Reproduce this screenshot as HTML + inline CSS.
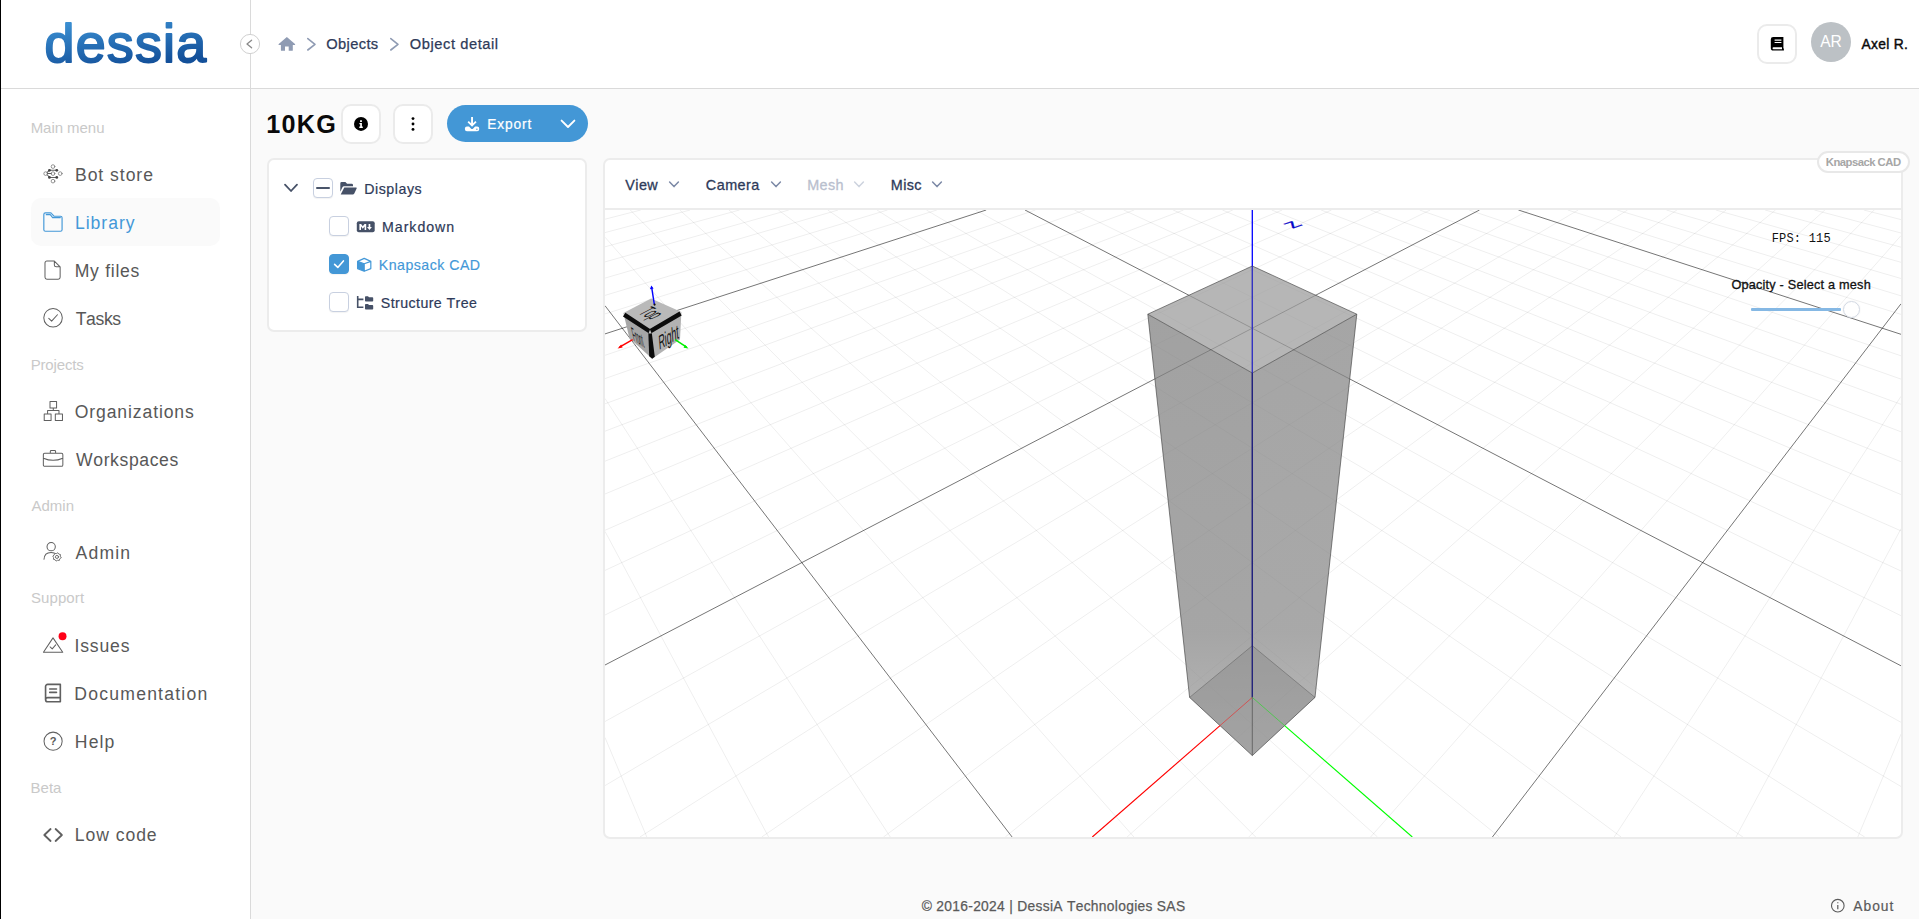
<!DOCTYPE html>
<html lang="en"><head><meta charset="utf-8"><title>Object detail</title>
<style>
*{box-sizing:border-box;margin:0;padding:0}
html,body{width:1919px;height:919px;overflow:hidden}
body{background:#fafafa;font-family:"Liberation Sans",sans-serif;position:relative;font-kerning:none}
.t{position:absolute;white-space:pre;font-weight:400;display:block}
.ic{position:absolute;display:block;overflow:visible}
.top{z-index:5}
#sidebar{position:absolute;left:0;top:0;width:251px;height:919px;background:#fff;border-right:1px solid #dadada}
#edge{position:absolute;left:0;top:0;width:1px;height:919px;background:#000;z-index:6}
#header{position:absolute;left:0;top:0;width:1919px;height:89px;background:#fff;border-bottom:1px solid #dadada}
.panel{position:absolute;background:#fff;border:2px solid #ececec;border-radius:7px}
.active{position:absolute;background:#fafafa;border-radius:10px}
.sqbtn{position:absolute;width:40px;height:40px;background:#fff;border:2px solid #ebebeb;border-radius:10px}
.avatar{position:absolute;width:40px;height:40px;border-radius:50%;background:#bcc1c5}
.export{position:absolute;background:#4397d6;border-radius:19px}
.cb{position:absolute;width:20px;height:20px;background:#fff;border:1px solid #c8d0e0;border-radius:4px;box-shadow:0 1px 1px rgba(0,0,0,.05)}
.cb i{position:absolute;left:2px;top:8px;width:14px;height:2px;background:#4a556a;border-radius:1px}
.cb.on{background:#4397d6;border-color:#4397d6}
.tag{position:absolute;background:#fff;border:2px solid #e8e8e8;border-radius:11px}
.track{position:absolute;background:#85b8e4;border-radius:1px}
.thumb{position:absolute;width:17px;height:17px;border-radius:50%;background:rgba(255,255,255,.75);border:1px solid #d3d9e3;box-shadow:0 0 2px rgba(0,0,0,.08)}
#canvas3d{position:absolute;left:605px;top:210px;display:block}
#hline{position:absolute;left:0;top:88px;width:1919px;height:1px;background:#dadada;z-index:3}
#tbline{position:absolute;left:605px;top:208px;width:1296px;height:2px;background:#ececec}
</style></head><body>
<header id="header">
<svg class="ic top" style="left:239px;top:32.75px" width="22" height="22" viewBox="0 0 22 22" ><circle cx="11" cy="11" r="9.6" fill="#fff" stroke="#d0d0d0" stroke-width="1"/><path d="M12.6 7.2L8 11L12.6 14.8" fill="none" stroke="#8a8a8a" stroke-width="1.3" stroke-linecap="round" stroke-linejoin="round"/></svg>
<svg class="ic" style="left:278px;top:36px" width="18" height="16" viewBox="0 0 18 16" ><path fill="#8f9bb3" d="M8.85 0.9L0.7 8.1a.5.5 0 0 0 .35.85H2.9V14.2a.6.6 0 0 0 .6.6H7V10.4H10.7V14.8h3.5a.6.6 0 0 0 .6-.6V8.95h1.85a.5.5 0 0 0 .35-.85Z"/></svg>
<svg class="ic" style="left:304.6px;top:36px" width="14" height="16" viewBox="0 0 14 16" ><path d="M2.8 2.6L10 8.3L2.8 14" fill="none" stroke="#8f9bb3" stroke-width="1.6" stroke-linecap="round" stroke-linejoin="round"/></svg>
<svg class="ic" style="left:387.7px;top:36px" width="14" height="16" viewBox="0 0 14 16" ><path d="M2.8 2.6L10 8.3L2.8 14" fill="none" stroke="#8f9bb3" stroke-width="1.6" stroke-linecap="round" stroke-linejoin="round"/></svg>
<span class="t" style="left:326.20px;top:35.00px;font-size:14.70px;line-height:19px;letter-spacing:0.365px;color:#2e3a59;-webkit-text-stroke:0.25px #2e3a59;">Objects</span>
<span class="t" style="left:409.80px;top:35.00px;font-size:14.70px;line-height:19px;letter-spacing:0.556px;color:#2e3a59;-webkit-text-stroke:0.25px #2e3a59;">Object detail</span>
<div class="sqbtn" style="left:1757px;top:24px"></div>
<svg class="ic" style="left:1769px;top:35px" width="16" height="18" viewBox="0 0 16 18" ><path fill="#000" d="M4.2 2H14.4V13.6H14.9V15.6H4.4A2.6 2.6 0 0 1 1.8 13V4.4A2.4 2.4 0 0 1 4.2 2ZM5.6 4.6V5.8H12.4V4.6ZM5.6 6.9V8.1H12.4V6.9ZM4.5 12.3a.95.95 0 0 0 0 1.9H13V12.3Z"/></svg>
<div class="avatar" style="left:1811px;top:21.8px"></div>
<span class="t" style="left:1820.37px;top:32.49px;font-size:15.60px;line-height:20px;letter-spacing:-0.217px;color:#fff;">AR</span>
<span class="t" style="left:1861.47px;top:35.52px;font-size:13.80px;line-height:18px;letter-spacing:0.335px;color:#0a0a0a;-webkit-text-stroke:0.4px #0a0a0a;">Axel R.</span>
</header>
<nav id="sidebar">
<svg class="ic logo" style="left:40px;top:14px" width="180" height="60" viewBox="0 0 180 60" ><defs><linearGradient id="lg" x1="0" y1="0" x2="0.35" y2="1"><stop offset="0.1" stop-color="#3f96d8"/><stop offset="0.95" stop-color="#13509a"/></linearGradient></defs><text x="4.6" y="48.0" font-family="Liberation Sans, sans-serif" font-size="53.8" letter-spacing="1.2" fill="url(#lg)" stroke="url(#lg)" stroke-width="1.9" stroke-linejoin="round">dessia</text></svg>
<span class="t sec" style="left:30.67px;top:117.70px;font-size:15.00px;line-height:20px;letter-spacing:-0.047px;color:#c9c9c9;">Main menu</span>
<span class="t sec" style="left:30.67px;top:354.50px;font-size:15.00px;line-height:20px;letter-spacing:-0.159px;color:#c9c9c9;">Projects</span>
<span class="t sec" style="left:31.57px;top:495.60px;font-size:15.00px;line-height:20px;letter-spacing:-0.028px;color:#c9c9c9;">Admin</span>
<span class="t sec" style="left:30.92px;top:588.10px;font-size:15.00px;line-height:20px;letter-spacing:0.109px;color:#c9c9c9;">Support</span>
<span class="t sec" style="left:30.57px;top:777.60px;font-size:15.00px;line-height:20px;letter-spacing:-0.009px;color:#c9c9c9;">Beta</span>
<div class="active" style="left:31px;top:198px;width:189px;height:48px"></div>
<span class="t item" style="left:74.96px;top:163.90px;font-size:17.60px;line-height:23px;letter-spacing:0.949px;color:#585858;">Bot store</span>
<span class="t item" style="left:74.96px;top:211.90px;font-size:17.60px;line-height:23px;letter-spacing:0.964px;color:#4398d8;">Library</span>
<span class="t item" style="left:74.66px;top:260.10px;font-size:17.60px;line-height:23px;letter-spacing:0.733px;color:#585858;">My files</span>
<span class="t item" style="left:75.70px;top:307.90px;font-size:17.60px;line-height:23px;letter-spacing:-0.377px;color:#585858;">Tasks</span>
<span class="t item" style="left:74.77px;top:401.00px;font-size:17.60px;line-height:23px;letter-spacing:0.873px;color:#585858;">Organizations</span>
<span class="t item" style="left:76.02px;top:448.90px;font-size:17.60px;line-height:23px;letter-spacing:0.610px;color:#585858;">Workspaces</span>
<span class="t item" style="left:75.57px;top:541.70px;font-size:17.60px;line-height:23px;letter-spacing:1.148px;color:#585858;">Admin</span>
<span class="t item" style="left:74.48px;top:635.00px;font-size:17.60px;line-height:23px;letter-spacing:0.839px;color:#585858;">Issues</span>
<span class="t item" style="left:74.36px;top:683.10px;font-size:17.60px;line-height:23px;letter-spacing:1.209px;color:#585858;">Documentation</span>
<span class="t item" style="left:74.86px;top:730.90px;font-size:17.60px;line-height:23px;letter-spacing:1.062px;color:#585858;">Help</span>
<span class="t item" style="left:74.86px;top:823.90px;font-size:17.60px;line-height:23px;letter-spacing:0.926px;color:#585858;">Low code</span>
<svg class="ic" style="left:41px;top:162px" width="24" height="24" viewBox="0 0 24 24" overflow="visible"><g transform="translate(12 12) scale(0.965) translate(-12 -12)"><g fill="none" stroke="#606060" stroke-width="1.05" stroke-linecap="round" stroke-linejoin="round"><circle cx="12" cy="4.3" r="1.9" stroke-width="0.8" stroke="#777"/><circle cx="4.4" cy="11.6" r="1.9" stroke-width="0.8" stroke="#777"/><circle cx="19.5" cy="11.6" r="1.9" stroke-width="0.8" stroke="#777"/><circle cx="12" cy="19.4" r="1.9" stroke-width="0.8" stroke="#777"/><circle cx="12" cy="11.6" r="1.9" stroke-width="0.8" stroke="#777"/><path d="M8.3 8.2H15.9M8.3 15.6H15.9M6.2 11.6H10.2M6 10.4L7.6 8.8M6 12.8L7.6 14.6"/></g><circle cx="8.3" cy="8.2" r="1.45" fill="#444"/><circle cx="15.9" cy="8.2" r="1.45" fill="#444"/><circle cx="8.3" cy="15.6" r="1.45" fill="#444"/><circle cx="15.9" cy="15.6" r="1.45" fill="#444"/></g></svg>
<svg class="ic" style="left:41px;top:210px" width="24" height="24" viewBox="0 0 24 24" overflow="visible"><g transform="translate(12 12) scale(0.965) translate(-12 -12)"><path fill="none" stroke="#4398d8" stroke-width="1.2" stroke-linecap="round" stroke-linejoin="round" d="M2.5 5.2V20a1.6 1.6 0 0 0 1.6 1.6H19.8a1.6 1.6 0 0 0 1.6-1.6V7.6a1.6 1.6 0 0 0-1.6-1.6H13L10.6 3.2a1.6 1.6 0 0 0-1.2-.6H4.1a1.6 1.6 0 0 0-1.6 1.6ZM5 4.4H9.2L11.6 7.4H19.6"/></g></svg>
<svg class="ic" style="left:41px;top:258px" width="24" height="24" viewBox="0 0 24 24" overflow="visible"><g transform="translate(12 12) scale(0.965) translate(-12 -12)"><path fill="none" stroke="#606060" stroke-width="1.05" stroke-linecap="round" stroke-linejoin="round" d="M5.7 2.7H13.4L19.4 8.7V19.5a2 2 0 0 1-2 2H5.7a2 2 0 0 1-2-2V4.7a2 2 0 0 1 2-2ZM13.4 2.9V6.7a2 2 0 0 0 2 2H19.2"/></g></svg>
<svg class="ic" style="left:41px;top:306px" width="24" height="24" viewBox="0 0 24 24" overflow="visible"><g transform="translate(12 12) scale(0.965) translate(-12 -12)"><g fill="none" stroke="#606060" stroke-width="1.05" stroke-linecap="round" stroke-linejoin="round"><circle cx="12.05" cy="11.8" r="9.6"/><path d="M7.6 12.4L10.6 15.3L16.6 8.6"/></g></g></svg>
<svg class="ic" style="left:41px;top:399px" width="24" height="24" viewBox="0 0 24 24" overflow="visible"><g transform="translate(12 12) scale(0.965) translate(-12 -12)"><path fill="none" stroke="#606060" stroke-width="1.05" stroke-linecap="round" stroke-linejoin="round" d="M8.9 2.1h6.8v6.7H8.9ZM2.9 15h7.1v6.8H2.9ZM14.4 15h7.4v6.8h-7.4ZM12.3 8.8V11.5M6.4 15V11.5H18.2V15"/></g></svg>
<svg class="ic" style="left:41px;top:447px" width="24" height="24" viewBox="0 0 24 24" overflow="visible"><g transform="translate(12 12) scale(0.965) translate(-12 -12)"><path fill="none" stroke="#606060" stroke-width="1.05" stroke-linecap="round" stroke-linejoin="round" d="M3.4 6.1H20.8a1.4 1.4 0 0 1 1.4 1.4V18.1a1.4 1.4 0 0 1-1.4 1.4H3.4A1.4 1.4 0 0 1 2 18.1V7.5A1.4 1.4 0 0 1 3.4 6.1ZM9.2 6V4.2a1 1 0 0 1 1-1h3.5a1 1 0 0 1 1 1V6M2.1 11.2Q12.1 15.6 22.1 11.2"/></g></svg>
<svg class="ic" style="left:41px;top:540px" width="24" height="24" viewBox="0 0 24 24" overflow="visible"><g transform="translate(12 12) scale(0.965) translate(-12 -12)"><g fill="none" stroke="#606060" stroke-width="1.05" stroke-linecap="round" stroke-linejoin="round"><circle cx="10.1" cy="6.5" r="4.3"/><path d="M2.7 19.6C2.9 14.6 6.2 12.4 10 12.4C11.4 12.4 12.4 12.7 13.2 13.1"/><g stroke-width="0.9"><path d="M20.42 17.96L19.01 19.04L18.54 20.76L16.78 20.53L15.24 21.42L14.16 20.01L12.44 19.54L12.67 17.78L11.78 16.24L13.19 15.16L13.66 13.44L15.42 13.67L16.96 12.78L18.04 14.19L19.76 14.66L19.53 16.42Z"/><circle cx="16.1" cy="17.1" r="1.6"/></g></g></g></svg>
<svg class="ic" style="left:41px;top:633px" width="24" height="24" viewBox="0 0 24 24" overflow="visible"><g transform="translate(12 12) scale(0.965) translate(-12 -12)"><g fill="none" stroke="#606060" stroke-width="1.05" stroke-linecap="round" stroke-linejoin="round"><path d="M12 4.6L2.1 19.6H22.1Z"/><path d="M9 14L11.2 16L14.8 11.9"/></g><circle cx="21.9" cy="2.9" r="4.1" fill="#ff0017"/></g></svg>
<svg class="ic" style="left:41px;top:681px" width="24" height="24" viewBox="0 0 24 24" overflow="visible"><g transform="translate(12 12) scale(0.965) translate(-12 -12)"><path fill="none" stroke="#606060"  stroke-linecap="round" stroke-linejoin="round" stroke-width="1.7" d="M4.3 18.9V5.3a2.2 2.2 0 0 1 2.2-2.2H19.6V21.1H6.5a2.15 2.15 0 0 1 0-4.3H19.6M8.6 7.8H15.6M8.6 11.4H15.6"/></g></svg>
<svg class="ic" style="left:41px;top:729px" width="24" height="24" viewBox="0 0 24 24" overflow="visible"><g transform="translate(12 12) scale(0.965) translate(-12 -12)"><circle fill="none" stroke="#606060" stroke-width="1.05" stroke-linecap="round" stroke-linejoin="round" cx="12.1" cy="12.2" r="9.4"/><text x="12.1" y="16.3" text-anchor="middle" font-family="Liberation Sans, sans-serif" font-size="11.5" font-weight="700" fill="#5a5a5a">?</text></g></svg>
<svg class="ic" style="left:41px;top:822.8px" width="24" height="24" viewBox="0 0 24 24" overflow="visible"><g transform="translate(12 12) scale(0.965) translate(-12 -12)"><path fill="none" stroke="#606060"  stroke-linecap="round" stroke-linejoin="round" stroke-width="1.9" d="M9.5 5.8L3 12L9.5 18.2M14.7 5.8L21.2 12L14.7 18.2"/></g></svg>
</nav>
<div id="hline"></div><div id="edge"></div>
<main>
<h1 class="t" style="left:266.21px;top:108.26px;font-size:25.20px;line-height:33px;letter-spacing:1.273px;color:#0a0a0a;font-weight:700;">10KG</h1>
<div class="sqbtn" style="left:341px;top:104px"></div>
<svg class="ic" style="left:353px;top:116px" width="16" height="16" viewBox="0 0 16 16" ><circle cx="8" cy="7.9" r="7" fill="#000"/><path d="M7.1 4.2h1.8v1.7H7.1ZM6.4 7h2.5v3.6h.9v1.3H6.3v-1.3h.9V8.3H6.4Z" fill="#fff"/></svg>
<div class="sqbtn" style="left:393px;top:104px"></div>
<svg class="ic" style="left:409px;top:114px" width="8" height="20" viewBox="0 0 8 20" ><circle cx="4" cy="4.6" r="1.45"/><circle cx="4" cy="10" r="1.45"/><circle cx="4" cy="15.4" r="1.45"/></svg>
<div class="export" style="left:447px;top:105px;width:141px;height:37px"></div>
<svg class="ic" style="left:463px;top:115px" width="18" height="18" viewBox="0 0 18 18" ><path fill="#fff" d="M8.1 2h1.9V8.2l2.3-2.3 1.3 1.3L9.05 11.8 4.5 7.2l1.3-1.3L8.1 8.2ZM3.9 11.6H6l1.9 1.9a1.6 1.6 0 0 0 2.3 0l1.9-1.9h2.1a2 2 0 0 1 2 2v.6a2 2 0 0 1-2 2H3.9a2 2 0 0 1-2-2V13.6a2 2 0 0 1 2-2ZM13.2 14.2a.7.7 0 1 0 1.4 0a.7.7 0 1 0-1.4 0Z"/></svg>
<span class="t" style="left:487.17px;top:116.02px;font-size:13.80px;line-height:18px;letter-spacing:0.870px;color:#fff;-webkit-text-stroke:0.2px #fff;">Export</span>
<svg class="ic" style="left:559px;top:117px" width="18" height="14" viewBox="0 0 18 14" ><path d="M2.6 3.6L9 10L15.4 3.6" fill="none" stroke="#fff" stroke-width="1.9" stroke-linecap="round" stroke-linejoin="round"/></svg>
<section class="panel" id="tree" style="left:267px;top:158px;width:320px;height:174px"></section>
<svg class="ic" style="left:282px;top:181px" width="18" height="14" viewBox="0 0 18 14" ><path d="M3 3.6L9 10L15 3.6" fill="none" stroke="#465167" stroke-width="1.8" stroke-linecap="round" stroke-linejoin="round"/></svg>
<div class="cb" style="left:313px;top:178px"><i></i></div>
<svg class="ic" style="left:339px;top:180px" width="19" height="16" viewBox="0 0 19 16" ><path fill="#465167" d="M1.3 3.4a1.3 1.3 0 0 1 1.3-1.3H6.4l1.7 1.7h4.6a1.3 1.3 0 0 1 1.3 1.3V6.3H5.1a2 2 0 0 0-1.8 1.1L1.3 11.8ZM5.3 7.4H17a.7.7 0 0 1 .64 1L15.3 13.6a1.3 1.3 0 0 1-1.2.8H1.7Z"/></svg>
<span class="t" style="left:364.24px;top:179.78px;font-size:14.20px;line-height:18px;letter-spacing:0.546px;color:#2e3a59;-webkit-text-stroke:0.2px #2e3a59;">Displays</span>
<div class="cb" style="left:329px;top:216px"></div>
<svg class="ic" style="left:356px;top:220px" width="20" height="14" viewBox="0 0 20 14" ><rect x="0.8" y="1.3" width="17.9" height="11" rx="2" fill="#465167"/><path fill="#fff" d="M3.4 10V3.9h1.7l1.7 2.3 1.7-2.3h1.7V10H8.6V6.4L6.8 8.7 5 6.4V10ZM12.6 3.9h1.7V7h1.6l-2.45 3L11 7h1.6Z"/></svg>
<span class="t" style="left:382.04px;top:217.78px;font-size:14.20px;line-height:18px;letter-spacing:0.955px;color:#2e3a59;-webkit-text-stroke:0.2px #2e3a59;">Markdown</span>
<div class="cb on" style="left:329px;top:254px"></div>
<svg class="ic" style="left:331px;top:256px" width="16" height="16" viewBox="0 0 16 16" ><path d="M3.6 8.4L6.8 11.4L12.4 4.9" fill="none" stroke="#fff" stroke-width="1.6" stroke-linecap="round" stroke-linejoin="round"/></svg>
<svg class="ic" style="left:356px;top:257px" width="17" height="16" viewBox="0 0 17 16" ><g transform="translate(8.2 7.85) scale(.92) translate(-8.2 -7.85)"><path fill="#4398d8" d="M1 4.1L8.2 6.7V14.85L1 11.9Z"/><path fill="none" stroke="#4398d8" stroke-width="1.3" stroke-linejoin="round" d="M8.2 0.85L15.4 4.1V11.9L8.2 14.85L1 11.9V4.1ZM1 4.1L8.2 6.7L15.4 4.1M8.2 6.7V14.85"/></g></svg>
<span class="t" style="left:378.74px;top:255.78px;font-size:14.20px;line-height:18px;letter-spacing:0.469px;color:#4398d8;-webkit-text-stroke:0.15px #4398d8;">Knapsack CAD</span>
<div class="cb" style="left:329px;top:292px"></div>
<svg class="ic" style="left:356px;top:295px" width="19" height="16" viewBox="0 0 19 16" ><path fill="none" stroke="#465167" stroke-width="1.6" d="M1.7 0.9V12.3H7.4M1.7 4.4H7.4"/><path fill="#465167" d="M9 2a.8.8 0 0 1 .8-.8h2.2l1 1h3.4a.8.8 0 0 1 .8.8v2.8a.8.8 0 0 1-.8.8H9.8a.8.8 0 0 1-.8-.8ZM9 9.9a.8.8 0 0 1 .8-.8h2.2l1 1h3.4a.8.8 0 0 1 .8.8v2.9a.8.8 0 0 1-.8.8H9.8a.8.8 0 0 1-.8-.8Z"/></svg>
<span class="t" style="left:380.86px;top:293.78px;font-size:14.20px;line-height:18px;letter-spacing:0.417px;color:#2e3a59;-webkit-text-stroke:0.2px #2e3a59;">Structure Tree</span>
<section class="panel" id="viewer" style="left:603px;top:158px;width:1300px;height:681px"></section>
<div id="tbline"></div>
<svg id="canvas3d" width="1296" height="627" viewBox="605 210 1296 627">
<defs><linearGradient id="gl" x1="0" y1="0" x2="0" y2="1"><stop offset="0" stop-color="#818181"/><stop offset="0.72" stop-color="#868686"/><stop offset="1" stop-color="#a1a1a1"/></linearGradient><linearGradient id="gr" x1="0" y1="0" x2="0" y2="1"><stop offset="0" stop-color="#868686"/><stop offset="0.72" stop-color="#8a8a8a"/><stop offset="1" stop-color="#a3a3a3"/></linearGradient></defs>
<path d="M1863.8 210L1901 219.6M1814.4 210L1901 233M1765.1 210L1901 247.2M1715.8 210L1901 262.3M1666.4 210L1901 278.5M1617.1 210L1901 295.8M1567.8 210L1901 314.4M1469.1 210L1901 355.8M1419.7 210L1901 379.1M1370.4 210L1901 404.3M1321.1 210L1901 431.8M1271.7 210L1901 461.7M1222.4 210L1901 494.6M1173.1 210L1901 530.9M1123.7 210L1901 571M1074.4 210L1901 615.7M975.7 210L1901 722.3M926.4 210L1901 786.5M877 210L1864.7 837M827.7 210L1742.9 837M778.4 210L1621.1 837M729 210L1499.3 837M679.7 210L1377.5 837M630.3 210L1255.7 837M605 237.2L1133.9 837M605 398.5L890.3 837M605 531.4L768.6 837M605 737.5L646.8 837" stroke="#000" stroke-opacity="0.068" stroke-width="1" fill="none"/>
<path d="M640.8 210L605 219.2M690.1 210L605 232.6M739.5 210L605 246.8M788.8 210L605 261.9M838.1 210L605 278.1M887.5 210L605 295.4M936.8 210L605 313.9M1035.5 210L605 355.3M1084.8 210L605 378.6M1134.2 210L605 403.8M1183.5 210L605 431.2M1232.8 210L605 461.2M1282.2 210L605 494M1331.5 210L605 530.3M1380.8 210L605 570.4M1430.2 210L605 615M1528.9 210L605 721.5M1578.2 210L605 785.6M1627.5 210L639.9 837M1676.9 210L761.7 837M1726.2 210L883.5 837M1775.5 210L1005.3 837M1824.9 210L1127.1 837M1874.2 210L1248.8 837M1901 235.6L1370.6 837M1901 396.3L1614.2 837M1901 528.7L1736 837M1901 734.1L1857.8 837" stroke="#000" stroke-opacity="0.068" stroke-width="1" fill="none"/>
<path d="M1518.4 210L1901 334.3M986.2 210L605 333.9M1025 210L1901 665.8M1479.5 210L605 665M605 305.7L1012.1 837M1901 303.8L1492.4 837" stroke="#000" stroke-opacity="0.54" stroke-width="1" fill="none"/>
<g id="mesh">
<line x1="1252.3" y1="697.4" x2="1252.3" y2="210" stroke="#0000ff" stroke-width="1.3" />
<polygon points="1189.6,697.4 1252.3,755.6 1252.3,373 1147.8,314.2" fill="url(#gl)" fill-opacity="0.74"/>
<polygon points="1252.3,755.6 1315,697.4 1356.8,314.2 1252.3,373" fill="url(#gr)" fill-opacity="0.74"/>
<polygon points="1147.8,314.2 1252.3,373 1356.8,314.2 1252.3,266" fill="#9c9c9c" fill-opacity="0.74"/>
<polygon points="1189.6,697.4 1252.3,755.6 1315,697.4 1252.3,645.7" fill="#8a8a8a" fill-opacity="0.45"/>
<path d="M1189.6 697.4L1252.3 755.6M1252.3 755.6L1315 697.4M1189.6 697.4L1147.8 314.2M1315 697.4L1356.8 314.2M1252.3 755.6L1252.3 373M1147.8 314.2L1252.3 373M1252.3 373L1356.8 314.2M1356.8 314.2L1252.3 266M1252.3 266L1147.8 314.2" stroke="#404040" stroke-width="0.8" fill="none" stroke-opacity="0.8"/>
<path d="M1189.6 697.4L1252.3 645.7M1252.3 645.7L1315 697.4" stroke="#444" stroke-width="0.7" fill="none" stroke-opacity="0.55"/>
<line x1="1252.3" y1="697.4" x2="1252.3" y2="373" stroke="#151580" stroke-width="1.2" stroke-opacity="0.85"/>
<line x1="1252.3" y1="373" x2="1252.3" y2="266" stroke="#2020c4" stroke-width="1.2" stroke-opacity="0.85"/>
</g>
<line x1="1252.3" y1="697.4" x2="1220" y2="725.6" stroke="#e03a3a" stroke-width="1.0" stroke-opacity="0.75"/>
<line x1="1252.3" y1="697.4" x2="1284.6" y2="725.6" stroke="#3ad03a" stroke-width="1.0" stroke-opacity="0.75"/>
<line x1="1220" y1="725.6" x2="1092.3" y2="837" stroke="#ff0000" stroke-width="1.15" />
<line x1="1284.6" y1="725.6" x2="1412.3" y2="837" stroke="#00ff00" stroke-width="1.15" />
<text x="-0.32" y="0" transform="matrix(1.643,-0.566,1.541,0.596,1293.4,228.4)" font-family="Liberation Sans, sans-serif" font-size="10" fill="#0000c8" stroke="#0000c8" stroke-width="0.25">Z</text>
<g id="viewcube"><polygon points="623.4,313 651.1,298.5 681.4,311.9 650,330.9" fill="#b9b9b9" /><polygon points="623.4,313 650,330.9 652.2,358.7 629.4,338" fill="#a6a6a6" /><polygon points="650,330.9 681.4,311.9 680,339.6 652.2,358.7" fill="#b2b2b2" /><path d="M624.2 314.6L650 331.5L680.6 313.5" stroke="#0c0c0c" stroke-width="4.4" fill="none" stroke-linejoin="miter"/><polygon points="648.3,332.1 651.7,332.1 654.8,356.7 652.2,358.7 649.2,356.3" fill="#0c0c0c" /><path d="M648.4 333.4L650 329.8L651.7 333.4Z" fill="#c4c4c4"/><text transform="matrix(1.0467,-0.6333,0.0733,0.9267,650,330.9)" x="7" y="25.5" font-family="Liberation Sans, sans-serif" font-size="21.5" fill="#111" textLength="19" lengthAdjust="spacingAndGlyphs">Right</text><text transform="matrix(0.8867,0.5967,0.2000,0.8333,623.4,313)" x="5" y="29.5" font-family="Liberation Sans, sans-serif" font-size="24" fill="#111" textLength="12.5" lengthAdjust="spacingAndGlyphs">Front</text><text transform="matrix(1.0100,0.4467,-0.9233,0.4833,651.1,298.5)" x="8" y="23.5" font-family="Liberation Sans, sans-serif" font-size="22" fill="#111" textLength="14" lengthAdjust="spacingAndGlyphs">Top</text><line x1="654.3" y1="304.2" x2="651.7" y2="287.6" stroke="#0000ff" stroke-width="1.4" /><path d="M649.9 289.2L651.3 285.4L653.6 288.6Z" fill="#0000ff"/><circle cx="654.6" cy="304.6" r="1.1" fill="#111"/><line x1="632.6" y1="339.6" x2="619.5" y2="347.2" stroke="#ff0000" stroke-width="1.5" /><path d="M617.6 348.4L621.2 344.6L622.6 347.6Z" fill="#ff0000"/><line x1="675.1" y1="339.6" x2="686.6" y2="347.2" stroke="#00ee00" stroke-width="1.5" /><path d="M688.6 348.4L684.9 344.7L683.6 347.7Z" fill="#00ee00"/></g>
</svg>
<span class="t menu" style="left:625.24px;top:176.21px;font-size:14.40px;line-height:19px;letter-spacing:0.439px;color:#2e3a59;-webkit-text-stroke:0.3px #2e3a59;">View</span>
<svg class="ic" style="left:667.3px;top:179px" width="14" height="12" viewBox="0 0 14 12" ><path d="M2.6 3L7 7.6L11.4 3" fill="none" stroke="#7c89a6" stroke-width="1.5" stroke-linecap="round" stroke-linejoin="round"/></svg>
<span class="t menu" style="left:705.77px;top:176.21px;font-size:14.40px;line-height:19px;letter-spacing:0.483px;color:#2e3a59;-webkit-text-stroke:0.3px #2e3a59;">Camera</span>
<svg class="ic" style="left:769.2px;top:179px" width="14" height="12" viewBox="0 0 14 12" ><path d="M2.6 3L7 7.6L11.4 3" fill="none" stroke="#7c89a6" stroke-width="1.5" stroke-linecap="round" stroke-linejoin="round"/></svg>
<span class="t menu" style="left:807.32px;top:176.21px;font-size:14.40px;line-height:19px;letter-spacing:0.301px;color:#b9c0ce;-webkit-text-stroke:0.3px #b9c0ce;">Mesh</span>
<svg class="ic" style="left:852.4px;top:179px" width="14" height="12" viewBox="0 0 14 12" ><path d="M2.6 3L7 7.6L11.4 3" fill="none" stroke="#cdd3de" stroke-width="1.5" stroke-linecap="round" stroke-linejoin="round"/></svg>
<span class="t menu" style="left:890.82px;top:176.21px;font-size:14.40px;line-height:19px;letter-spacing:0.355px;color:#2e3a59;-webkit-text-stroke:0.3px #2e3a59;">Misc</span>
<svg class="ic" style="left:930.2px;top:179px" width="14" height="12" viewBox="0 0 14 12" ><path d="M2.6 3L7 7.6L11.4 3" fill="none" stroke="#7c89a6" stroke-width="1.5" stroke-linecap="round" stroke-linejoin="round"/></svg>
<div class="tag" style="left:1817px;top:151px;width:93px;height:22px"></div>
<span class="t" style="left:1825.84px;top:154.98px;font-size:11.30px;line-height:15px;letter-spacing:-0.525px;color:#a6a6a6;font-weight:700;">Knapsack CAD</span>
<span class="t" style="left:1771.66px;top:231.21px;font-size:12.00px;line-height:16px;letter-spacing:0.198px;color:#111;font-family:'Liberation Mono',monospace;">FPS: 115</span>
<span class="t" style="left:1731.40px;top:277.10px;font-size:12.70px;line-height:17px;letter-spacing:0.210px;color:#111;-webkit-text-stroke:0.3px #111;">Opacity - Select a mesh</span>
<div class="track" style="left:1751px;top:308px;width:90px;height:3px"></div>
<div class="thumb" style="left:1842.5px;top:301px"></div>
</main>
<footer class="t" style="left:921.69px;top:897.52px;font-size:13.80px;line-height:18px;letter-spacing:0.309px;color:#5a5a5a;-webkit-text-stroke:0.25px #5a5a5a;">© 2016-2024 | DessiA Technologies SAS</footer>
<svg class="ic" style="left:1830px;top:898px" width="16" height="16" viewBox="0 0 16 16" ><circle cx="7.8" cy="7.7" r="6.3" fill="none" stroke="#5a5a5a" stroke-width="1.1"/><path d="M7.8 6.9V11.2M7.8 4.3V5.3" stroke="#5a5a5a" stroke-width="1.2" fill="none"/></svg>
<span class="t" style="left:1853.27px;top:897.62px;font-size:13.80px;line-height:18px;letter-spacing:1.016px;color:#5a5a5a;-webkit-text-stroke:0.2px #5a5a5a;">About</span>
</body></html>
